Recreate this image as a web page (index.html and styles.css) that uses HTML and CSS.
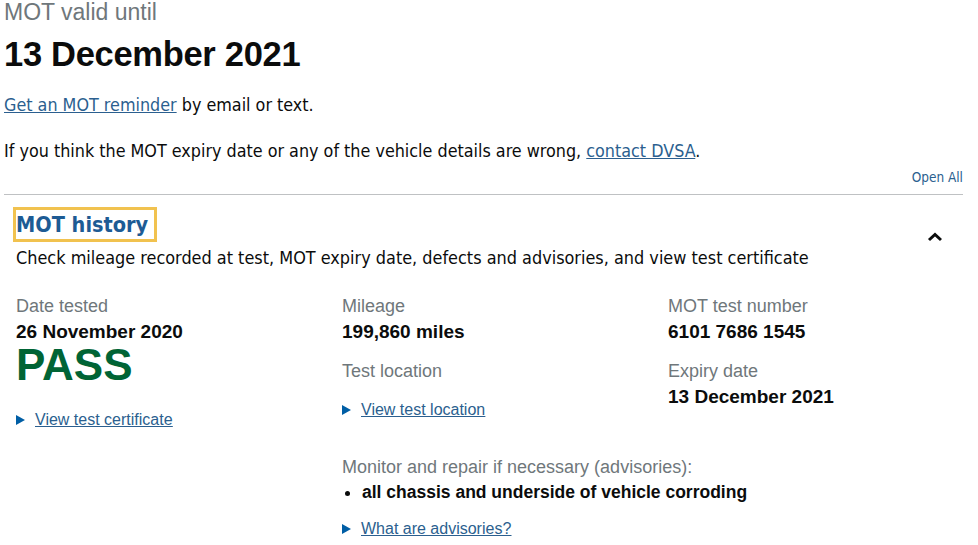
FILE: index.html
```html
<!DOCTYPE html>
<html lang="en">
<head>
    <meta charset="UTF-8">
    <meta name="viewport" content="width=device-width, initial-scale=1.0">
    <title>MOT history</title>
    <link rel="stylesheet" href="styles.css">
</head>
<body>
    <div class="page">
        <div class="expiry">
            <span class="expiry-label">MOT valid until</span>
            <h1 class="expiry-date">13 December 2021</h1>
        </div>

        <p class="body-text"><a href="#">Get an MOT reminder</a> by email or text.</p>
        <p class="body-text">If you think the MOT expiry date or any of the vehicle details are wrong, <a href="#">contact DVSA</a>.</p>

        <div class="accordion-controls">
            <a href="#" class="open-all">Open All</a>
        </div>

        <div class="accordion">
            <div class="accordion-header">
                <div class="accordion-title">
                    <h2 class="section-title"><span class="focus-box">MOT history</span></h2>
                    <p class="section-summary">Check mileage recorded at test, MOT expiry date, defects and advisories, and view test certificate</p>
                </div>
                <svg class="chevron" width="16" height="10" viewBox="0 0 16 10">
                    <path d="M2 8 L8 2.5 L14 8" fill="none" stroke="#0b0c0c" stroke-width="3"/>
                </svg>
            </div>

            <div class="test-result">
                <div class="result-col">
                    <div class="field">
                        <span class="field-label">Date tested</span>
                        <span class="field-value">26 November 2020</span>
                        <span class="pass">PASS</span>
                    </div>
                    <a href="#" class="disclosure first"><span class="arrow"></span><span class="disclosure-text">View test certificate</span></a>
                </div>

                <div class="result-col">
                    <div class="field">
                        <span class="field-label">Mileage</span>
                        <span class="field-value">199,860 miles</span>
                    </div>
                    <div class="field">
                        <span class="field-label">Test location</span>
                    </div>
                    <a href="#" class="disclosure tight"><span class="arrow"></span><span class="disclosure-text">View test location</span></a>

                    <div class="advisories">
                        <span class="field-label">Monitor and repair if necessary (advisories):</span>
                        <ul class="advisory-list">
                            <li>all chassis and underside of vehicle corroding</li>
                        </ul>
                        <a href="#" class="disclosure"><span class="arrow"></span><span class="disclosure-text">What are advisories?</span></a>
                    </div>
                </div>

                <div class="result-col">
                    <div class="field">
                        <span class="field-label">MOT test number</span>
                        <span class="field-value">6101 7686 1545</span>
                    </div>
                    <div class="field">
                        <span class="field-label">Expiry date</span>
                        <span class="field-value">13 December 2021</span>
                    </div>
                </div>
            </div>
        </div>
    </div>
</body>
</html>
```

FILE: styles.css
```css
body{
    margin: 0;
    background: #ffffff;
    color: #0b0c0c;
    font-family: "Liberation Sans", Arial, sans-serif;
}

.page{
    width: 959px;
    padding-left: 4px;
}

a{
    color: #2b5f8f;
}

.expiry-label{
    display: block;
    margin-top: -1px;
    font-size: 23px;
    line-height: 26px;
    color: #6f777b;
}

.expiry-date{
    margin: 8px 0 0 0;
    font-size: 34.5px;
    line-height: 42px;
    font-weight: bold;
    letter-spacing: -0.3px;
}

.body-text{
    font-family: "Liberation Sans Narrow", "DejaVu Sans Condensed", sans-serif;
    font-size: 17.8px;
    line-height: 25px;
    margin: 0;
}

.body-text:first-of-type{
    margin-top: 17px;
}

.body-text + .body-text{
    margin-top: 21px;
}

.accordion-controls{
    text-align: right;
    margin-top: 5px;
    padding-bottom: 8px;
    border-bottom: 1px solid #bfc1c3;
}

.open-all{
    font-family: "Liberation Sans Narrow", "DejaVu Sans Condensed", sans-serif;
    font-size: 13.5px;
    line-height: 17px;
    color: #2b5f8f;
    text-decoration: none;
}

.accordion{
    padding-left: 12px;
}

.accordion-header{
    display: flex;
    justify-content: space-between;
    align-items: flex-start;
    padding-top: 14px;
}

.section-title{
    margin: 0 0 0 -1px;
    font-family: "Liberation Sans Narrow", "DejaVu Sans Condensed", sans-serif;
    font-size: 21.5px;
    line-height: 31px;
    font-weight: bold;
    color: #1d5b94;
}

.focus-box{
    display: inline-block;
    padding: 0 7px 0 1px;
    outline: 3px solid #f1c24f;
    outline-offset: -1px;
}

.section-summary{
    margin: 7px 0 0 0;
    font-family: "Liberation Sans Narrow", "DejaVu Sans Condensed", sans-serif;
    font-size: 17.9px;
    line-height: 22px;
}

.chevron{
    margin-top: 23px;
    margin-right: 20px;
}

.test-result{
    display: grid;
    grid-template-columns: 326px 326px 1fr;
    margin-top: 25px;
}

.field{
    display: flex;
    flex-direction: column;
    margin-bottom: 15px;
}

.field-label{
    font-size: 18px;
    line-height: 25px;
    color: #6f777b;
    white-space: nowrap;
}

.field-value{
    font-size: 19px;
    line-height: 25px;
    font-weight: bold;
}

.pass{
    font-size: 44px;
    line-height: 48px;
    font-weight: bold;
    color: #006435;
    margin-top: -3px;
}

.disclosure{
    display: flex;
    align-items: center;
    font-size: 16px;
    line-height: 20px;
    color: #2b5f8f;
}

.disclosure.first{
    margin-top: 21px;
}

.disclosure.tight{
    margin-top: 16px;
}

.arrow{
    width: 0;
    height: 0;
    border-top: 5px solid transparent;
    border-bottom: 5px solid transparent;
    border-left: 9px solid #005ea5;
    margin-right: 10px;
}

.disclosure-text{
    text-decoration: underline;
}

.advisories{
    margin-top: 35px;
}

.advisory-list{
    margin: 0;
    padding-left: 20px;
    font-size: 17.5px;
    line-height: 25px;
    font-weight: bold;
    white-space: nowrap;
}

.advisories .disclosure{
    margin-top: 14px;
}
```
